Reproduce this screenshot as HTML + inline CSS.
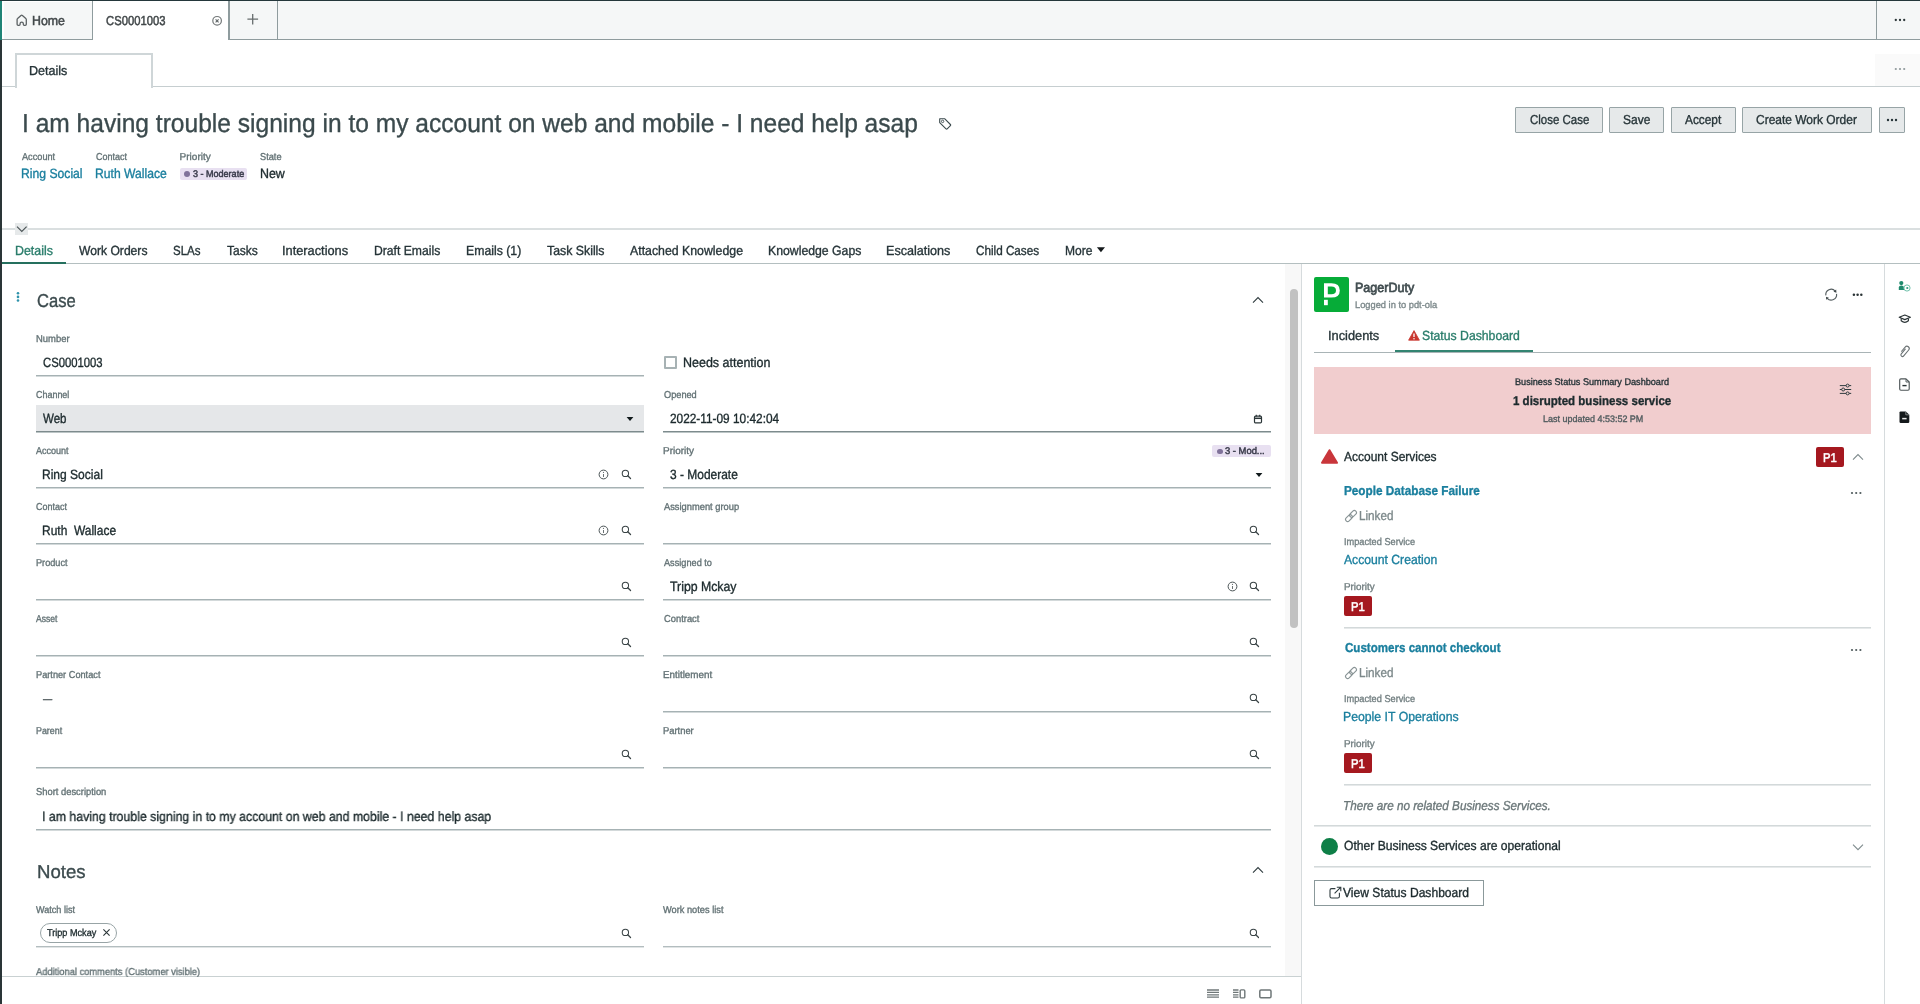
<!DOCTYPE html>
<html lang="en">
<head>
<meta charset="utf-8">
<title>CS0001003 | Case | Agent Workspace</title>
<style>
html,body{margin:0;padding:0;}
body{width:1920px;height:1004px;overflow:hidden;background:#fff;position:relative;font-family:"Liberation Sans",sans-serif;}
#app{position:absolute;left:0;top:0;width:1920px;height:1004px;overflow:hidden;will-change:transform;text-rendering:geometricPrecision;}
header,nav,main,section,aside,footer{display:block;position:static;margin:0;padding:0;}
.a{position:absolute;display:block;}
.t{position:absolute;display:block;margin:0;padding:0;white-space:pre;line-height:20px;transform-origin:0 50%;font-weight:400;text-decoration:none;-webkit-text-stroke:0.35px currentColor;}
</style>
</head>
<body>
<div id="app">
<nav aria-label="Workspace tabs">
<div class="a" style="left:0px;top:0px;width:1920px;height:1px;background:#24373b;"></div>
<div class="a" style="left:2px;top:1px;width:1918px;height:38px;background:#f5f7f7;"></div>
<div class="a" style="left:2px;top:39px;width:1918px;height:1px;background:#8f9c9e;"></div>
<div class="a" style="left:2px;top:1px;width:91px;height:1px;background:#fff;"></div>
<div class="a" style="left:2px;top:1px;width:2px;height:38px;background:#fff;"></div>
<div class="a" style="left:92px;top:1px;width:1px;height:39px;background:#8f9c9e;"></div>
<div class="a" style="left:93px;top:1px;width:135px;height:39px;background:#fff;"></div>
<div class="a" style="left:228px;top:1px;width:2px;height:39px;background:#8f9c9e;"></div>
<div class="a" style="left:277px;top:1px;width:1px;height:39px;background:#8f9c9e;"></div>
<div class="a" style="left:1876px;top:1px;width:1px;height:39px;background:#8f9c9e;"></div>
<div class="a" style="left:0px;top:1px;width:2px;height:39px;background:#1f8476;"></div>
<div class="a" style="left:0px;top:40px;width:2px;height:964px;background:#2a3537;"></div>
<svg class="a" style="left:14px;top:12px;" width="16" height="16" viewBox="14 12 16 16"><path d="M17.1 19.6 Q17.1 18.9 17.6 18.5 L21 15.5 Q21.7 14.9 22.4 15.5 L25.8 18.5 Q26.3 18.9 26.3 19.6 V24.2 Q26.3 25.3 25.2 25.3 H24.3 Q23.3 25.3 23.3 24.3 V23.6 Q23.3 22.1 21.7 22.1 Q20.1 22.1 20.1 23.6 V24.3 Q20.1 25.3 19.1 25.3 H18.2 Q17.1 25.3 17.1 24.2 Z" fill="none" stroke="#5b6163" stroke-width="1.3" stroke-linejoin="round"/></svg>
<span class="t" style="left:32.05px;top:11px;font-size:13px;color:#42484a;transform:scaleX(0.9515);-webkit-text-stroke-width:0.5px;">Home</span>
<span class="t" style="left:106.40px;top:11px;font-size:13px;color:#42484a;transform:scaleX(0.8676);-webkit-text-stroke-width:0.5px;">CS0001003</span>
<svg class="a" style="left:211px;top:14px;" width="13" height="14" viewBox="211 14 13 14"><circle cx="217.1" cy="20.8" r="4.3" fill="none" stroke="#74797a" stroke-width="1.2"/><path d="M215.6 19.3 L218.6 22.3 M218.6 19.3 L215.6 22.3" stroke="#5f6566" stroke-width="1.1" fill="none"/></svg>
<svg class="a" style="left:246px;top:12px;" width="14" height="14" viewBox="246 12 14 14"><path d="M252.7 13.9 V24.4 M247.4 19.1 H258.1" stroke="#676d6e" stroke-width="1.3" fill="none"/></svg>
<svg class="a" style="left:1893px;top:17px;" width="14" height="6" viewBox="0 0 14 6"><circle cx="2.8" cy="3" r="1.15" fill="#2c3638"/><circle cx="7" cy="3" r="1.15" fill="#2c3638"/><circle cx="11.2" cy="3" r="1.15" fill="#2c3638"/></svg>
</nav>
<nav aria-label="Record sub tabs">
<div class="a" style="left:2px;top:86px;width:1918px;height:1px;background:#c6ced0;"></div>
<div class="a" style="left:15px;top:53px;width:138px;height:35px;background:#fff;border:2px solid #cfd6d8;box-sizing:border-box;border-bottom:0;"></div>
<span class="t" style="left:29.33px;top:61px;font-size:13px;color:#263438;transform:scaleX(0.9658);">Details</span>
<div class="a" style="left:1875px;top:54px;width:45px;height:32px;background:#fafafa;"></div>
<svg class="a" style="left:1893px;top:66px;" width="14" height="6" viewBox="0 0 14 6"><circle cx="2.8" cy="3" r="1.1" fill="#8f999b"/><circle cx="7" cy="3" r="1.1" fill="#8f999b"/><circle cx="11.2" cy="3" r="1.1" fill="#8f999b"/></svg>
</nav>
<header aria-label="Case header">
<h1 class="t" style="left:21.81px;top:113px;font-size:26px;color:#3b4a4d;transform:scaleX(0.9449);">I am having trouble signing in to my account on web and mobile - I need help asap</h1>
<svg class="a" style="left:938px;top:116px;" width="15" height="15" viewBox="0 0 15 15"><path d="M1.7 2.7 H6.6 L12.4 8.5 Q13 9.1 12.4 9.7 L9.2 12.9 Q8.6 13.5 8 12.9 L1.7 6.6 Z" fill="none" stroke="#3b4a4d" stroke-width="1.1" stroke-linejoin="round"/><circle cx="4.6" cy="5.4" r="1.2" fill="none" stroke="#3b4a4d" stroke-width="0.9"/></svg>
<span class="t" style="left:22.00px;top:148px;font-size:10px;color:#637275;transform:scaleX(0.9167);">Account</span>
<span class="t" style="left:96.00px;top:148px;font-size:10px;color:#637275;transform:scaleX(0.9000);">Contact</span>
<span class="t" style="left:179.60px;top:148px;font-size:10px;color:#637275;transform:scaleX(1.0000);">Priority</span>
<span class="t" style="left:260.00px;top:148px;font-size:10px;color:#637275;transform:scaleX(0.9217);">State</span>
<a class="t" style="left:21.09px;top:164px;font-size:13.4px;color:#1a7f9e;transform:scaleX(0.9091);">Ring Social</a>
<a class="t" style="left:95.09px;top:164px;font-size:13.4px;color:#1a7f9e;transform:scaleX(0.9077);">Ruth Wallace</a>
<div class="a" style="left:180px;top:168px;width:67px;height:12px;background:#e8e0f1;border-radius:2px;"></div>
<div class="a" style="left:184.2px;top:171px;width:6px;height:6px;background:#80729a;border-radius:3px;"></div>
<span class="t" style="left:193.00px;top:165px;font-size:9.6px;color:#3b3c4c;transform:scaleX(0.9407);-webkit-text-stroke-width:0.5px;">3 - Moderate</span>
<span class="t" style="left:259.57px;top:164px;font-size:13.4px;color:#1c2a2d;transform:scaleX(0.9269);">New</span>
<div class="a" style="left:1515px;top:107px;width:88px;height:26px;background:#e6e9ea;border:1px solid #97a4a6;box-sizing:border-box;border-radius:1px;"></div>
<span class="t" style="left:1529.50px;top:110px;font-size:13px;color:#263438;transform:scaleX(0.8821);">Close Case</span>
<div class="a" style="left:1609px;top:107px;width:55px;height:26px;background:#e6e9ea;border:1px solid #97a4a6;box-sizing:border-box;border-radius:1px;"></div>
<span class="t" style="left:1622.68px;top:110px;font-size:13px;color:#263438;transform:scaleX(0.9214);">Save</span>
<div class="a" style="left:1671px;top:107px;width:65px;height:26px;background:#e6e9ea;border:1px solid #97a4a6;box-sizing:border-box;border-radius:1px;"></div>
<span class="t" style="left:1684.90px;top:110px;font-size:13px;color:#263438;transform:scaleX(0.9125);">Accept</span>
<div class="a" style="left:1742px;top:107px;width:130px;height:26px;background:#e6e9ea;border:1px solid #97a4a6;box-sizing:border-box;border-radius:1px;"></div>
<span class="t" style="left:1756.40px;top:110px;font-size:13px;color:#263438;transform:scaleX(0.9209);">Create Work Order</span>
<div class="a" style="left:1879px;top:107px;width:26px;height:26px;background:#e6e9ea;border:1px solid #97a4a6;box-sizing:border-box;border-radius:1px;"></div>
<svg class="a" style="left:1885px;top:117px;" width="14" height="6" viewBox="0 0 14 6"><circle cx="3" cy="3" r="1.2" fill="#263438"/><circle cx="7" cy="3" r="1.2" fill="#263438"/><circle cx="11" cy="3" r="1.2" fill="#263438"/></svg>
<div class="a" style="left:2px;top:228px;width:1918px;height:2px;background:#dadfe0;"></div>
<div class="a" style="left:15px;top:223px;width:13px;height:12px;background:#e6e9ea;"></div>
<svg class="a" style="left:15px;top:223px;" width="14" height="12" viewBox="0 0 14 12"><path d="M2 3.6 L6.8 8.4 L11.6 3.6" fill="none" stroke="#4d5658" stroke-width="1.2"/></svg>
</header>
<nav aria-label="Record tabs">
<div class="a" style="left:2px;top:263px;width:1918px;height:1px;background:#b4bfc0;"></div>
<div class="a" style="left:2px;top:262px;width:64px;height:2px;background:#25705e;"></div>
<span class="t" style="left:15.26px;top:241px;font-size:13.2px;color:#2a7d6b;transform:scaleX(0.9385);">Details</span>
<span class="t" style="left:79.00px;top:241px;font-size:13.2px;color:#263438;transform:scaleX(0.9189);">Work Orders</span>
<span class="t" style="left:172.93px;top:241px;font-size:13.2px;color:#263438;transform:scaleX(0.8733);">SLAs</span>
<span class="t" style="left:226.50px;top:241px;font-size:13.2px;color:#263438;transform:scaleX(0.9091);">Tasks</span>
<span class="t" style="left:282.03px;top:241px;font-size:13.2px;color:#263438;transform:scaleX(0.9701);">Interactions</span>
<span class="t" style="left:374.08px;top:241px;font-size:13.2px;color:#263438;transform:scaleX(0.9225);">Draft Emails</span>
<span class="t" style="left:466.07px;top:241px;font-size:13.2px;color:#263438;transform:scaleX(0.9310);">Emails (1)</span>
<span class="t" style="left:547.00px;top:241px;font-size:13.2px;color:#263438;transform:scaleX(0.9344);">Task Skills</span>
<span class="t" style="left:630.00px;top:241px;font-size:13.2px;color:#263438;transform:scaleX(0.9339);">Attached Knowledge</span>
<span class="t" style="left:768.07px;top:241px;font-size:13.2px;color:#263438;transform:scaleX(0.9293);">Knowledge Gaps</span>
<span class="t" style="left:886.05px;top:241px;font-size:13.2px;color:#263438;transform:scaleX(0.9545);">Escalations</span>
<span class="t" style="left:976.00px;top:241px;font-size:13.2px;color:#263438;transform:scaleX(0.8873);">Child Cases</span>
<span class="t" style="left:1064.99px;top:241px;font-size:13.2px;color:#263438;transform:scaleX(0.9138);">More</span>
<svg class="a" style="left:1095px;top:245px;" width="12" height="10" viewBox="1095 245 12 10"><path d="M1096.9 247.2 H1105 L1100.95 252.3 Z" fill="#14191b"/></svg>
</nav>
<main aria-label="Case form">
<div class="a" style="left:1285px;top:264px;width:16px;height:713px;background:#f8f8f8;"></div>
<div class="a" style="left:1290px;top:289px;width:8px;height:339px;background:#c1c1c1;border-radius:4px;"></div>
<div class="a" style="left:1301px;top:264px;width:1px;height:740px;background:#d6dbdd;"></div>
<div class="a" style="left:1884px;top:264px;width:1px;height:740px;background:#d6dbdd;"></div>
<div class="a" style="left:2px;top:976px;width:1299px;height:1px;background:#c9d1d2;"></div>
<svg class="a" style="left:14px;top:290px;" width="8" height="14" viewBox="14 290 8 14"><circle cx="18" cy="293.25" r="1.3" fill="#2f93ab"/><circle cx="18" cy="296.9" r="1.3" fill="#2f93ab"/><circle cx="18" cy="300.5" r="1.3" fill="#2f93ab"/></svg>
<h2 class="t" style="left:37.41px;top:291px;font-size:18.6px;color:#3b4a4d;transform:scaleX(0.8929);">Case</h2>
<h2 class="t" style="left:37.41px;top:862px;font-size:18.6px;color:#3b4a4d;transform:scaleX(0.9915);">Notes</h2>
<svg class="a" style="left:1252px;top:295.5px;" width="12" height="8" viewBox="0 0 12 8"><path d="M1 6.6 L6 1.6 L11 6.6" fill="none" stroke="#2f3c3f" stroke-width="1.1"/></svg>
<svg class="a" style="left:1252px;top:866px;" width="12" height="8" viewBox="0 0 12 8"><path d="M1 6.6 L6 1.6 L11 6.6" fill="none" stroke="#2f3c3f" stroke-width="1.1"/></svg>
<label class="t" style="left:35.96px;top:330px;font-size:10px;color:#637275;transform:scaleX(0.9441);">Number</label>
<label class="t" style="left:36.30px;top:386px;font-size:10px;color:#637275;transform:scaleX(0.8946);">Channel</label>
<label class="t" style="left:36.30px;top:442px;font-size:10px;color:#637275;transform:scaleX(0.9028);">Account</label>
<label class="t" style="left:36.30px;top:498px;font-size:10px;color:#637275;transform:scaleX(0.8971);">Contact</label>
<label class="t" style="left:35.99px;top:554px;font-size:10px;color:#637275;transform:scaleX(0.9147);">Product</label>
<label class="t" style="left:36.30px;top:610px;font-size:10px;color:#637275;transform:scaleX(0.8600);">Asset</label>
<label class="t" style="left:35.98px;top:666px;font-size:10px;color:#637275;transform:scaleX(0.9203);">Partner Contact</label>
<label class="t" style="left:36.01px;top:722px;font-size:10px;color:#637275;transform:scaleX(0.8862);">Parent</label>
<label class="t" style="left:663.50px;top:386px;font-size:10px;color:#637275;transform:scaleX(0.9200);">Opened</label>
<label class="t" style="left:663.00px;top:442px;font-size:10px;color:#637275;transform:scaleX(0.9967);">Priority</label>
<label class="t" style="left:663.50px;top:498px;font-size:10px;color:#637275;transform:scaleX(0.9313);">Assignment group</label>
<label class="t" style="left:663.50px;top:554px;font-size:10px;color:#637275;transform:scaleX(0.9173);">Assigned to</label>
<label class="t" style="left:663.50px;top:610px;font-size:10px;color:#637275;transform:scaleX(0.9368);">Contract</label>
<label class="t" style="left:663.02px;top:666px;font-size:10px;color:#637275;transform:scaleX(0.9837);">Entitlement</label>
<label class="t" style="left:663.06px;top:722px;font-size:10px;color:#637275;transform:scaleX(0.9375);">Partner</label>
<div class="a" style="left:36px;top:405px;width:608px;height:26px;background:#e5e7e9;"></div>
<div class="a" style="left:36px;top:375px;width:608px;height:1px;background:#a6b2b4;"></div>
<div class="a" style="left:36px;top:376px;width:608px;height:1px;background:#d3d9da;"></div>
<div class="a" style="left:36px;top:431px;width:608px;height:1px;background:#7d8b8d;"></div>
<div class="a" style="left:36px;top:432px;width:608px;height:1px;background:#bcc5c6;"></div>
<div class="a" style="left:663px;top:431px;width:608px;height:1px;background:#7d8b8d;"></div>
<div class="a" style="left:663px;top:432px;width:608px;height:1px;background:#bcc5c6;"></div>
<div class="a" style="left:36px;top:487px;width:608px;height:1px;background:#a6b2b4;"></div>
<div class="a" style="left:36px;top:488px;width:608px;height:1px;background:#d3d9da;"></div>
<div class="a" style="left:663px;top:487px;width:608px;height:1px;background:#a6b2b4;"></div>
<div class="a" style="left:663px;top:488px;width:608px;height:1px;background:#d3d9da;"></div>
<div class="a" style="left:36px;top:543px;width:608px;height:1px;background:#a6b2b4;"></div>
<div class="a" style="left:36px;top:544px;width:608px;height:1px;background:#d3d9da;"></div>
<div class="a" style="left:663px;top:543px;width:608px;height:1px;background:#a6b2b4;"></div>
<div class="a" style="left:663px;top:544px;width:608px;height:1px;background:#d3d9da;"></div>
<div class="a" style="left:36px;top:599px;width:608px;height:1px;background:#a6b2b4;"></div>
<div class="a" style="left:36px;top:600px;width:608px;height:1px;background:#d3d9da;"></div>
<div class="a" style="left:663px;top:599px;width:608px;height:1px;background:#a6b2b4;"></div>
<div class="a" style="left:663px;top:600px;width:608px;height:1px;background:#d3d9da;"></div>
<div class="a" style="left:36px;top:655px;width:608px;height:1px;background:#a6b2b4;"></div>
<div class="a" style="left:36px;top:656px;width:608px;height:1px;background:#d3d9da;"></div>
<div class="a" style="left:663px;top:655px;width:608px;height:1px;background:#a6b2b4;"></div>
<div class="a" style="left:663px;top:656px;width:608px;height:1px;background:#d3d9da;"></div>
<div class="a" style="left:663px;top:711px;width:608px;height:1px;background:#a6b2b4;"></div>
<div class="a" style="left:663px;top:712px;width:608px;height:1px;background:#d3d9da;"></div>
<div class="a" style="left:36px;top:767px;width:608px;height:1px;background:#a6b2b4;"></div>
<div class="a" style="left:36px;top:768px;width:608px;height:1px;background:#d3d9da;"></div>
<div class="a" style="left:663px;top:767px;width:608px;height:1px;background:#a6b2b4;"></div>
<div class="a" style="left:663px;top:768px;width:608px;height:1px;background:#d3d9da;"></div>
<svg class="a" style="left:626px;top:416px;" width="8" height="6" viewBox="0 0 8 6"><path d="M0.6 1 H7.4 L4 5 Z" fill="#111a1c"/></svg>
<svg class="a" style="left:1255px;top:472px;" width="8" height="6" viewBox="0 0 8 6"><path d="M0.6 1 H7.4 L4 5 Z" fill="#111a1c"/></svg>
<span class="t" style="left:42.80px;top:353px;font-size:13.4px;color:#1c2a2d;transform:scaleX(0.8429);">CS0001003</span>
<span class="t" style="left:42.80px;top:409px;font-size:13.4px;color:#1c2a2d;transform:scaleX(0.8593);">Web</span>
<span class="t" style="left:42.00px;top:465px;font-size:13.4px;color:#1c2a2d;transform:scaleX(0.8985);">Ring Social</span>
<span class="t" style="left:41.61px;top:521px;font-size:13.4px;color:#1c2a2d;transform:scaleX(0.8939);">Ruth  Wallace</span>
<span class="t" style="left:43.00px;top:689px;font-size:13.4px;color:#566163;transform:scaleX(0.6857);">—</span>
<svg class="a" style="left:598.3px;top:468.5px;" width="11" height="11" viewBox="0 0 11 11"><circle cx="5.5" cy="5.5" r="4.4" fill="none" stroke="#4a5355" stroke-width="1"/><path d="M5.5 5 V8" stroke="#6a7274" stroke-width="1"/><circle cx="5.5" cy="3.4" r="0.6" fill="#6a7274"/></svg>
<svg class="a" style="left:621.4px;top:469.4px;" width="10.5" height="10.5" viewBox="0 0 11 11"><circle cx="4.6" cy="4.6" r="3.3" fill="none" stroke="#394345" stroke-width="1.1"/><path d="M7.1 7.1 L10 10" stroke="#394345" stroke-width="1.3" stroke-linecap="round"/></svg>
<svg class="a" style="left:598.3px;top:524.5px;" width="11" height="11" viewBox="0 0 11 11"><circle cx="5.5" cy="5.5" r="4.4" fill="none" stroke="#4a5355" stroke-width="1"/><path d="M5.5 5 V8" stroke="#6a7274" stroke-width="1"/><circle cx="5.5" cy="3.4" r="0.6" fill="#6a7274"/></svg>
<svg class="a" style="left:621.4px;top:525.4px;" width="10.5" height="10.5" viewBox="0 0 11 11"><circle cx="4.6" cy="4.6" r="3.3" fill="none" stroke="#394345" stroke-width="1.1"/><path d="M7.1 7.1 L10 10" stroke="#394345" stroke-width="1.3" stroke-linecap="round"/></svg>
<svg class="a" style="left:621.4px;top:581.4px;" width="10.5" height="10.5" viewBox="0 0 11 11"><circle cx="4.6" cy="4.6" r="3.3" fill="none" stroke="#394345" stroke-width="1.1"/><path d="M7.1 7.1 L10 10" stroke="#394345" stroke-width="1.3" stroke-linecap="round"/></svg>
<svg class="a" style="left:621.4px;top:637.4px;" width="10.5" height="10.5" viewBox="0 0 11 11"><circle cx="4.6" cy="4.6" r="3.3" fill="none" stroke="#394345" stroke-width="1.1"/><path d="M7.1 7.1 L10 10" stroke="#394345" stroke-width="1.3" stroke-linecap="round"/></svg>
<svg class="a" style="left:621.4px;top:749.4px;" width="10.5" height="10.5" viewBox="0 0 11 11"><circle cx="4.6" cy="4.6" r="3.3" fill="none" stroke="#394345" stroke-width="1.1"/><path d="M7.1 7.1 L10 10" stroke="#394345" stroke-width="1.3" stroke-linecap="round"/></svg>
<div class="a" style="left:663.5px;top:356px;width:13px;height:13px;background:#fff;border:2px solid #a7b2b4;box-sizing:border-box;border-radius:1px;"></div>
<label class="t" style="left:683.17px;top:353px;font-size:13.4px;color:#1c2a2d;transform:scaleX(0.9326);">Needs attention</label>
<span class="t" style="left:669.90px;top:409px;font-size:13.4px;color:#1c2a2d;transform:scaleX(0.8846);">2022-11-09 10:42:04</span>
<svg class="a" style="left:1253px;top:413.5px;" width="10" height="10" viewBox="0 0 10 10"><rect x="1.5" y="2.2" width="7" height="6.6" rx="1.1" fill="none" stroke="#2a3537" stroke-width="1.2"/><path d="M1.5 4.3 H8.5" stroke="#2a3537" stroke-width="1.5"/><path d="M3.3 0.8 V2.4 M6.7 0.8 V2.4" stroke="#2a3537" stroke-width="1.1"/></svg>
<div class="a" style="left:1212px;top:445px;width:59px;height:12px;background:#e8e0f1;border-radius:2px;"></div>
<div class="a" style="left:1217px;top:448.5px;width:5.5px;height:5.5px;background:#80729a;border-radius:3px;"></div>
<span class="t" style="left:1225.40px;top:442px;font-size:9.6px;color:#3b3c4c;transform:scaleX(0.9800);-webkit-text-stroke-width:0.5px;">3 - Mod...</span>
<span class="t" style="left:669.90px;top:465px;font-size:13.4px;color:#1c2a2d;transform:scaleX(0.8934);">3 - Moderate</span>
<svg class="a" style="left:1249.4px;top:525.4px;" width="10.5" height="10.5" viewBox="0 0 11 11"><circle cx="4.6" cy="4.6" r="3.3" fill="none" stroke="#394345" stroke-width="1.1"/><path d="M7.1 7.1 L10 10" stroke="#394345" stroke-width="1.3" stroke-linecap="round"/></svg>
<span class="t" style="left:670.20px;top:577px;font-size:13.4px;color:#1c2a2d;transform:scaleX(0.9181);">Tripp Mckay</span>
<svg class="a" style="left:1226.5px;top:580.5px;" width="11" height="11" viewBox="0 0 11 11"><circle cx="5.5" cy="5.5" r="4.4" fill="none" stroke="#4a5355" stroke-width="1"/><path d="M5.5 5 V8" stroke="#6a7274" stroke-width="1"/><circle cx="5.5" cy="3.4" r="0.6" fill="#6a7274"/></svg>
<svg class="a" style="left:1249.4px;top:581.4px;" width="10.5" height="10.5" viewBox="0 0 11 11"><circle cx="4.6" cy="4.6" r="3.3" fill="none" stroke="#394345" stroke-width="1.1"/><path d="M7.1 7.1 L10 10" stroke="#394345" stroke-width="1.3" stroke-linecap="round"/></svg>
<svg class="a" style="left:1249.4px;top:637.4px;" width="10.5" height="10.5" viewBox="0 0 11 11"><circle cx="4.6" cy="4.6" r="3.3" fill="none" stroke="#394345" stroke-width="1.1"/><path d="M7.1 7.1 L10 10" stroke="#394345" stroke-width="1.3" stroke-linecap="round"/></svg>
<svg class="a" style="left:1249.4px;top:693.4px;" width="10.5" height="10.5" viewBox="0 0 11 11"><circle cx="4.6" cy="4.6" r="3.3" fill="none" stroke="#394345" stroke-width="1.1"/><path d="M7.1 7.1 L10 10" stroke="#394345" stroke-width="1.3" stroke-linecap="round"/></svg>
<svg class="a" style="left:1249.4px;top:749.4px;" width="10.5" height="10.5" viewBox="0 0 11 11"><circle cx="4.6" cy="4.6" r="3.3" fill="none" stroke="#394345" stroke-width="1.1"/><path d="M7.1 7.1 L10 10" stroke="#394345" stroke-width="1.3" stroke-linecap="round"/></svg>
<label class="t" style="left:36.30px;top:783px;font-size:10px;color:#637275;transform:scaleX(0.9373);">Short description</label>
<span class="t" style="left:41.58px;top:807px;font-size:13.4px;color:#1c2a2d;transform:scaleX(0.9199);">I am having trouble signing in to my account on web and mobile - I need help asap</span>
<div class="a" style="left:36px;top:829px;width:1235px;height:1px;background:#a6b2b4;"></div>
<div class="a" style="left:36px;top:830px;width:1235px;height:1px;background:#d3d9da;"></div>
<label class="t" style="left:36.00px;top:901px;font-size:10px;color:#637275;transform:scaleX(0.9070);">Watch list</label>
<label class="t" style="left:663.40px;top:901px;font-size:10px;color:#637275;transform:scaleX(0.9246);">Work notes list</label>
<div class="a" style="left:39.5px;top:923px;width:77.5px;height:20px;background:#fff;border:1px solid #98a4a6;box-sizing:border-box;border-radius:10px;"></div>
<span class="t" style="left:47.10px;top:924px;font-size:10px;color:#1c2a2d;transform:scaleX(0.9111);">Tripp Mckay</span>
<svg class="a" style="left:102px;top:928px;" width="9" height="9" viewBox="0 0 9 9"><path d="M1.4 1.4 L7.6 7.6 M7.6 1.4 L1.4 7.6" stroke="#2a3537" stroke-width="1.1" fill="none"/></svg>
<svg class="a" style="left:621.4px;top:928.4px;" width="10.5" height="10.5" viewBox="0 0 11 11"><circle cx="4.6" cy="4.6" r="3.3" fill="none" stroke="#394345" stroke-width="1.1"/><path d="M7.1 7.1 L10 10" stroke="#394345" stroke-width="1.3" stroke-linecap="round"/></svg>
<svg class="a" style="left:1248.9px;top:928.4px;" width="10.5" height="10.5" viewBox="0 0 11 11"><circle cx="4.6" cy="4.6" r="3.3" fill="none" stroke="#394345" stroke-width="1.1"/><path d="M7.1 7.1 L10 10" stroke="#394345" stroke-width="1.3" stroke-linecap="round"/></svg>
<div class="a" style="left:36px;top:946px;width:608px;height:1px;background:#b3bdbf;"></div>
<div class="a" style="left:36px;top:947px;width:608px;height:1px;background:#e0e4e5;"></div>
<div class="a" style="left:663px;top:946px;width:608px;height:1px;background:#b3bdbf;"></div>
<div class="a" style="left:663px;top:947px;width:608px;height:1px;background:#e0e4e5;"></div>
<label class="t" style="left:36.00px;top:963px;font-size:10px;color:#637275;transform:scaleX(0.9318);">Additional comments (Customer visible)</label>
<div class="a" style="left:2px;top:977px;width:1299px;height:27px;background:#fff;"></div>
<svg class="a" style="left:1207px;top:989px;" width="12" height="10" viewBox="0 0 12 10"><path d="M0 1 H12 M0 3.4 H12 M0 5.8 H12 M0 8.2 H12" stroke="#6f7778" stroke-width="1.3"/></svg>
<svg class="a" style="left:1233px;top:989px;" width="13" height="10" viewBox="0 0 13 10"><path d="M0 1 H5.5 M0 3.4 H5.5 M0 5.8 H5.5 M0 8.2 H5.5" stroke="#6f7778" stroke-width="1.3"/><rect x="7.2" y="0.9" width="4.6" height="8" rx="1" fill="none" stroke="#6f7778" stroke-width="1.4"/></svg>
<svg class="a" style="left:1259px;top:989px;" width="13" height="10" viewBox="0 0 13 10"><rect x="0.8" y="1" width="11.2" height="7.8" rx="1.2" fill="none" stroke="#6f7778" stroke-width="1.5"/></svg>
</main>
<aside aria-label="PagerDuty">
<div class="a" style="left:1314px;top:277px;width:35px;height:35px;background:#06ac38;border-radius:2px;"></div>
<svg class="a" style="left:1314px;top:277px;" width="35" height="35" viewBox="0 0 35 35"><path d="M10 6.2 H17.4 Q25.8 6.2 25.8 13.4 Q25.8 20.6 17.4 20.6 H10 Z M13.8 9.6 V17.2 H17.4 Q22 17.2 22 13.4 Q22 9.6 17.4 9.6 Z" fill="#fff" fill-rule="evenodd"/><rect x="10" y="22.8" width="3.8" height="5.4" fill="#fff"/></svg>
<span class="t" style="left:1355.06px;top:278px;font-size:13.4px;color:#414d50;transform:scaleX(0.9355);-webkit-text-stroke-width:0.7px;">PagerDuty</span>
<span class="t" style="left:1355.03px;top:296px;font-size:9.6px;color:#7d898b;transform:scaleX(0.9690);">Logged in to pdt-ola</span>
<svg class="a" style="left:1823px;top:286px;" width="17" height="18" viewBox="1823 286 17 18"><path d="M1825.85 295.45 A5.4 5.4 0 0 1 1835.21 291.09" fill="none" stroke="#555e60" stroke-width="1.15"/><path d="M1836.55 293.95 A5.4 5.4 0 0 1 1827.19 298.31" fill="none" stroke="#555e60" stroke-width="1.15"/><path d="M1836.44 292.64 L1836.18 289.54 L1833.50 291.63 Z" fill="#3f484a"/><path d="M1825.96 296.76 L1826.22 299.86 L1828.90 297.77 Z" fill="#3f484a"/></svg>
<svg class="a" style="left:1850px;top:291px;" width="16" height="8" viewBox="1850 291 16 8"><circle cx="1853.9" cy="294.7" r="1.25" fill="#2a3335"/><circle cx="1857.6" cy="294.7" r="1.25" fill="#2a3335"/><circle cx="1861.3" cy="294.7" r="1.25" fill="#2a3335"/></svg>
<span class="t" style="left:1327.53px;top:326px;font-size:13.2px;color:#263438;transform:scaleX(0.9712);">Incidents</span>
<svg class="a" style="left:1408px;top:330px;" width="12" height="11" viewBox="0 0 12 11"><path d="M6 0.6 L11.4 10.2 H0.6 Z" fill="#c9362f" stroke="#c9362f" stroke-width="0.8" stroke-linejoin="round"/><path d="M6 3.6 V7" stroke="#fff" stroke-width="1.3"/><circle cx="6" cy="8.7" r="0.75" fill="#fff"/></svg>
<span class="t" style="left:1421.77px;top:326px;font-size:13.2px;color:#2a7d6b;transform:scaleX(0.9269);">Status Dashboard</span>
<div class="a" style="left:1314px;top:352px;width:557px;height:1px;background:#a9b4b6;"></div>
<div class="a" style="left:1395px;top:350px;width:138px;height:2px;background:#338471;"></div>
<div class="a" style="left:1314px;top:367px;width:557px;height:67px;background:#f1cdce;"></div>
<span class="t" style="left:1514.85px;top:373px;font-size:9.6px;color:#263438;transform:scaleX(0.9503);">Business Status Summary Dashboard</span>
<span class="t" style="left:1512.98px;top:391px;font-size:12.6px;color:#1c2a2d;transform:scaleX(0.9151);font-weight:700;">1 disrupted business service</span>
<span class="t" style="left:1542.50px;top:409px;font-size:9.4px;color:#505b5e;transform:scaleX(0.9577);">Last updated 4:53:52 PM</span>
<svg class="a" style="left:1839px;top:383px;" width="13" height="13" viewBox="0 0 13 13"><path d="M0.8 2.6 H12.2 M0.8 6.5 H12.2 M0.8 10.4 H12.2" stroke="#2f3c3f" stroke-width="1"/><circle cx="8.6" cy="2.6" r="1.5" fill="#f1cdce" stroke="#2f3c3f" stroke-width="1"/><circle cx="4.2" cy="6.5" r="1.5" fill="#f1cdce" stroke="#2f3c3f" stroke-width="1"/><circle cx="8.6" cy="10.4" r="1.5" fill="#f1cdce" stroke="#2f3c3f" stroke-width="1"/></svg>
<svg class="a" style="left:1320px;top:448px;" width="19" height="17" viewBox="0 0 19 17"><path d="M9.5 2.2 L17 14.8 H2 Z" fill="#c9363b" stroke="#c9363b" stroke-width="2" stroke-linejoin="round"/></svg>
<span class="t" style="left:1343.90px;top:447px;font-size:13.2px;color:#1c2a2d;transform:scaleX(0.9088);">Account Services</span>
<div class="a" style="left:1816px;top:447px;width:28px;height:20px;background:#a5181f;border-radius:2px;"></div>
<span class="t" style="left:1822.71px;top:448px;font-size:12.8px;color:#fff;transform:scaleX(0.8857);-webkit-text-stroke-width:0.55px;">P1</span>
<svg class="a" style="left:1851.5px;top:453px;" width="12" height="8" viewBox="0 0 12 8"><path d="M1 6.6 L6 1.6 L11 6.6" fill="none" stroke="#7f8b8d" stroke-width="1.1"/></svg>
<a class="t" style="left:1343.80px;top:481px;font-size:13px;color:#1a7f9e;transform:scaleX(0.9034);font-weight:700;">People Database Failure</a>
<svg class="a" style="left:1849.5px;top:491px;" width="13" height="4" viewBox="0 0 13 4"><circle cx="2" cy="2" r="1.1" fill="#4f5a5c"/><circle cx="6.2" cy="2" r="1.1" fill="#4f5a5c"/><circle cx="10.4" cy="2" r="1.1" fill="#4f5a5c"/></svg>
<svg class="a" style="left:1344px;top:509px;" width="14" height="14" viewBox="0 0 14 14"><g transform="rotate(-45 7 7)" fill="none" stroke="#899496" stroke-width="1.15"><rect x="0.2" y="4.9" width="7.8" height="4.2" rx="2.1"/><rect x="6" y="4.9" width="7.8" height="4.2" rx="2.1"/></g></svg>
<span class="t" style="left:1358.90px;top:506px;font-size:13px;color:#7c888a;transform:scaleX(0.8973);">Linked</span>
<span class="t" style="left:1343.88px;top:533px;font-size:10px;color:#727f81;transform:scaleX(0.9197);">Impacted Service</span>
<a class="t" style="left:1344.40px;top:550px;font-size:13.2px;color:#1a7f9e;transform:scaleX(0.9218);">Account Creation</a>
<span class="t" style="left:1343.81px;top:578px;font-size:10px;color:#727f81;transform:scaleX(0.9867);">Priority</span>
<div class="a" style="left:1344px;top:596px;width:28px;height:20px;background:#a5181f;border-radius:2px;"></div>
<span class="t" style="left:1350.71px;top:597px;font-size:12.8px;color:#fff;transform:scaleX(0.8857);-webkit-text-stroke-width:0.55px;">P1</span>
<div class="a" style="left:1344px;top:627px;width:527px;height:1px;background:#d3d9da;"></div>
<div class="a" style="left:1344px;top:628px;width:527px;height:1px;background:#e6e9ea;"></div>
<a class="t" style="left:1344.70px;top:638px;font-size:13px;color:#1a7f9e;transform:scaleX(0.8897);font-weight:700;">Customers cannot checkout</a>
<svg class="a" style="left:1849.5px;top:648px;" width="13" height="4" viewBox="0 0 13 4"><circle cx="2" cy="2" r="1.1" fill="#4f5a5c"/><circle cx="6.2" cy="2" r="1.1" fill="#4f5a5c"/><circle cx="10.4" cy="2" r="1.1" fill="#4f5a5c"/></svg>
<svg class="a" style="left:1344px;top:666px;" width="14" height="14" viewBox="0 0 14 14"><g transform="rotate(-45 7 7)" fill="none" stroke="#899496" stroke-width="1.15"><rect x="0.2" y="4.9" width="7.8" height="4.2" rx="2.1"/><rect x="6" y="4.9" width="7.8" height="4.2" rx="2.1"/></g></svg>
<span class="t" style="left:1358.90px;top:663px;font-size:13px;color:#7c888a;transform:scaleX(0.8973);">Linked</span>
<span class="t" style="left:1343.88px;top:690px;font-size:10px;color:#727f81;transform:scaleX(0.9197);">Impacted Service</span>
<a class="t" style="left:1343.47px;top:707px;font-size:13.2px;color:#1a7f9e;transform:scaleX(0.9293);">People IT Operations</a>
<span class="t" style="left:1343.81px;top:735px;font-size:10px;color:#727f81;transform:scaleX(0.9867);">Priority</span>
<div class="a" style="left:1344px;top:753px;width:28px;height:20px;background:#a5181f;border-radius:2px;"></div>
<span class="t" style="left:1350.71px;top:754px;font-size:12.8px;color:#fff;transform:scaleX(0.8857);-webkit-text-stroke-width:0.55px;">P1</span>
<div class="a" style="left:1344px;top:784px;width:527px;height:1px;background:#d3d9da;"></div>
<div class="a" style="left:1344px;top:785px;width:527px;height:1px;background:#e6e9ea;"></div>
<span class="t" style="left:1343.00px;top:796px;font-size:13px;color:#6b7779;transform:scaleX(0.8987);font-style:italic;">There are no related Business Services.</span>
<div class="a" style="left:1314px;top:825px;width:557px;height:1px;background:#d3d9da;"></div>
<div class="a" style="left:1314px;top:826px;width:557px;height:1px;background:#e6e9ea;"></div>
<div class="a" style="left:1321px;top:838px;width:17px;height:17px;background:#0e7f47;border-radius:9px;"></div>
<span class="t" style="left:1343.90px;top:836px;font-size:13.2px;color:#1c2a2d;transform:scaleX(0.9179);">Other Business Services are operational</span>
<svg class="a" style="left:1851.5px;top:842.5px;" width="12" height="8" viewBox="0 0 12 8"><path d="M1 1.6 L6 6.6 L11 1.6" fill="none" stroke="#7f8b8d" stroke-width="1.1"/></svg>
<div class="a" style="left:1314px;top:866px;width:557px;height:1px;background:#d3d9da;"></div>
<div class="a" style="left:1314px;top:867px;width:557px;height:1px;background:#e6e9ea;"></div>
<div class="a" style="left:1314px;top:880px;width:170px;height:26px;background:#fff;border:1px solid #8b999b;box-sizing:border-box;"></div>
<svg class="a" style="left:1328px;top:886px;" width="14" height="14" viewBox="0 0 14 14"><path d="M7.4 2.6 H3.6 Q2 2.6 2 4.2 V10.4 Q2 12 3.6 12 H9.8 Q11.4 12 11.4 10.4 V6.8" fill="none" stroke="#2f3c3f" stroke-width="1.1"/><path d="M6.6 7.4 L12.6 1.4 M8.8 1.2 H12.8 V5.2" fill="none" stroke="#2f3c3f" stroke-width="1.1"/></svg>
<span class="t" style="left:1343.00px;top:883px;font-size:13.2px;color:#1c2a2d;transform:scaleX(0.9161);">View Status Dashboard</span>
</aside>
<nav aria-label="Contextual side panel">
<svg class="a" style="left:1896px;top:279px;" width="18" height="16" viewBox="1896 279 18 16"><circle cx="1901.3" cy="283.1" r="2.1" fill="#1e8a6d"/><path d="M1898.8 289.9 V287.6 Q1898.8 285.4 1901.3 285.4 Q1903.8 285.4 1904 287.2 V289.9 Z" fill="#1e8a6d"/><circle cx="1907" cy="288" r="3.1" fill="#fff" stroke="#6fc0aa" stroke-width="1"/><circle cx="1907.3" cy="288" r="1.1" fill="#2f9a7f"/></svg>
<svg class="a" style="left:1896px;top:312px;" width="18" height="14" viewBox="1896 312 18 14"><path d="M1899.2 317.3 L1904.8 315 L1910.4 317.3 L1904.8 319.6 Z" fill="none" stroke="#2b3436" stroke-width="1.15" stroke-linejoin="round"/><path d="M1901.2 318.6 V320.8 Q1904.8 323.8 1908.4 320.8 V318.6" fill="none" stroke="#2b3436" stroke-width="1.15"/></svg>
<svg class="a" style="left:1896px;top:343px;" width="18" height="18" viewBox="1896 343 18 18"><g transform="translate(1904.4 351.5) rotate(-50)"><path d="M2.4 -0.9 H-3.8 A1.6 1.6 0 0 0 -3.8 2.3 H3.9 A2.3 2.3 0 0 0 3.9 -2.3 H-1.6" fill="none" stroke="#6a7173" stroke-width="1.1" stroke-linecap="round"/></g></svg>
<svg class="a" style="left:1896px;top:376px;" width="18" height="18" viewBox="1896 376 18 18"><path d="M1900.9 378.9 H1906 L1909.2 382 V389 Q1909.2 390.2 1908 390.2 H1900.9 Q1899.7 390.2 1899.7 389 V380.1 Q1899.7 378.9 1900.9 378.9 Z" fill="none" stroke="#4d5557" stroke-width="1.15" stroke-linejoin="round"/><path d="M1906 379 V382 H1909" fill="none" stroke="#4d5557" stroke-width="0.9"/><path d="M1902.4 385.6 H1906.6" stroke="#2b3436" stroke-width="1.4"/></svg>
<svg class="a" style="left:1896px;top:409px;" width="18" height="17" viewBox="1896 409 18 17"><path d="M1900.7 411.4 H1905.8 L1909.3 414.8 V421.8 Q1909.3 423 1908.1 423 H1900.7 Q1899.5 423 1899.5 421.8 V412.6 Q1899.5 411.4 1900.7 411.4 Z" fill="#14191b"/><path d="M1902.2 418.6 H1906.6" stroke="#e8e8e8" stroke-width="1.5"/><path d="M1905.8 411.6 V414.8 H1909" fill="none" stroke="#9a9fa0" stroke-width="0.8"/></svg>
</nav>
</div>
</body>
</html>
